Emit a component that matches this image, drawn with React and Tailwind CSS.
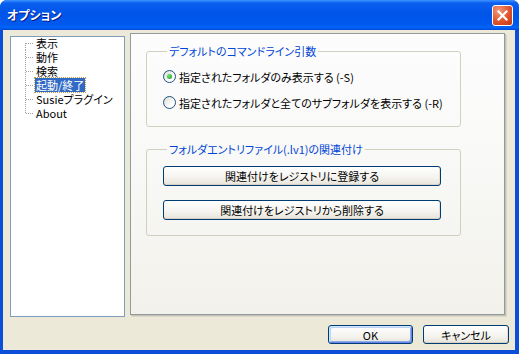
import React from "react";

const FONT = "font-['Noto_Sans_CJK_JP','Noto_Sans',sans-serif] [font-feature-settings:'palt']";

const treeItems = ["表示", "動作", "検索", "起動/終了", "Susieプラグイン", "About"];

function TreeConnector({ first, last }) {
  // dotted tree lines drawn per row
  return (
    <svg width="10" height="14" className="shrink-0" shapeRendering="crispEdges">
      <line
        x1="0.5"
        y1={first ? 7 : 0}
        x2="0.5"
        y2={last ? 7 : 14}
        stroke="#A0A0A0"
        strokeDasharray="1 1"
      />
      <line x1="1" y1="7.5" x2="9" y2="7.5" stroke="#A0A0A0" strokeDasharray="1 1" />
    </svg>
  );
}

function Radio({ checked, label }) {
  return (
    <div className="flex items-center gap-[3px] h-[13px]">
      <span className="w-[13px] h-[13px] rounded-full border border-[#1C5180] bg-[linear-gradient(135deg,#DCDBD4_0%,#FFFFFF_70%)] flex items-center justify-center shrink-0">
        {checked && (
          <span className="w-[5px] h-[5px] rounded-full bg-[radial-gradient(circle_at_35%_35%,#6BE46A,#1E9A1E)]" />
        )}
      </span>
      <span className="text-[11px] leading-[14px] text-black whitespace-nowrap">{label}</span>
    </div>
  );
}

function XPButton({ children, className = "", isDefault }) {
  return (
    <button
      className={
        "h-[20px] rounded-[3px] border border-[#003C74] bg-[linear-gradient(to_bottom,#FFFFFF_0%,#F4F3EE_60%,#E6E3D8_100%)] text-[11px] leading-[14px] text-black flex items-center justify-center " +
        (isDefault
          ? "shadow-[inset_1px_1px_0_#CEE7FF,inset_-1px_-1px_0_#6982EE,inset_2px_2px_0_#BCD4F6,inset_-2px_-2px_0_#89ADE4] "
          : "shadow-[inset_0_-1px_0_#D6D0C5,inset_-1px_0_0_#E2DFD6] ") +
        className
      }
    >
      {children}
    </button>
  );
}

export default function App() {
  return (
    <div className={`w-[519px] h-[354px] flex flex-col bg-[#0B4FD8] rounded-t-[7px] overflow-hidden ${FONT}`}>
      {/* Title bar */}
      <div className="h-[30px] shrink-0 flex items-center justify-between pl-[7px] pr-[6px] bg-[linear-gradient(to_bottom,#3D95FF_0%,#0A5FEF_10%,#0055E8_45%,#0058EE_80%,#0064F6_92%,#0046D8_100%)]">
        <span className="text-white font-bold text-[12px] leading-[16px] [text-shadow:1px_1px_0_#0A1883]">オプション</span>
        <div className="w-[21px] h-[21px] rounded-[3px] border border-white bg-[radial-gradient(circle_at_30%_25%,#F29A7C_0%,#E0532B_55%,#C2360F_100%)] flex items-center justify-center">
          <svg width="11" height="11" viewBox="0 0 11 11">
            <path d="M1.5 1.5 L9.5 9.5 M9.5 1.5 L1.5 9.5" stroke="#FFFFFF" strokeWidth="2.2" strokeLinecap="square" />
          </svg>
        </div>
      </div>

      {/* Body */}
      <div className="flex-1 flex flex-col ml-[3px] mr-[4px] mb-[4px] bg-[#ECE9D8]">
        <div className="flex items-start gap-[5px] pt-[3px] pl-[7px]">
          {/* Tree */}
          <div className="mt-[3px] w-[115px] h-[281px] bg-white border border-[#7F9DB9] pl-[14px]">
            <div className="flex flex-col -mt-px">
              {treeItems.map((item, i) => (
                <div key={item} className="flex items-center h-[14px]">
                  <TreeConnector first={i === 0} last={i === treeItems.length - 1} />
                  {i === 3 ? (
                    <span className="text-[11px] leading-[14px] text-white bg-[#316AC5] outline-1 outline-dotted outline-[#C8A04A] px-[1px] whitespace-nowrap">
                      {item}
                    </span>
                  ) : (
                    <span className="text-[11px] leading-[14px] text-black px-[1px] whitespace-nowrap">{item}</span>
                  )}
                </div>
              ))}
            </div>
          </div>

          {/* Tab page */}
          <div className="w-[375px] h-[282px] border border-[#919B9C] bg-[linear-gradient(to_bottom,#FDFDFE_0%,#F8F8F6_50%,#F2F1EB_100%)] shadow-[1px_1px_0_#C4C2B6,2px_2px_0_#DAD7C8] pt-[10px] pl-[15px]">
            <fieldset className="w-[315px] border border-[#D0D0BF] rounded-[3px] pl-[16px] pt-[12px] pb-[17px]">
              <legend className="ml-[4px] px-[2px] text-[11px] leading-[14px] text-[#0046D5]">
                デフォルトのコマンドライン引数
              </legend>
              <div className="flex flex-col gap-[13px]">
                <Radio checked label="指定されたフォルダのみ表示する (-S)" />
                <Radio label="指定されたフォルダと全てのサブフォルダを表示する (-R)" />
              </div>
            </fieldset>

            <fieldset className="mt-[15px] w-[315px] border border-[#D0D0BF] rounded-[3px] pl-[16px] pt-[10px] pb-[15px]">
              <legend className="ml-[4px] px-[2px] text-[11px] leading-[14px] text-[#0046D5]">
                フォルダエントリファイル(.lv1)の関連付け
              </legend>
              <div className="flex flex-col gap-[14px]">
                <XPButton className="w-[278px]">関連付けをレジストリに登録する</XPButton>
                <XPButton className="w-[278px]">関連付けをレジストリから削除する</XPButton>
              </div>
            </fieldset>
          </div>
        </div>

        {/* Dialog buttons */}
        <div className="flex justify-end gap-[10px] pr-[6px] mt-[8px]">
          <XPButton isDefault className="w-[85px] !h-[19px]">OK</XPButton>
          <XPButton className="w-[86px] !h-[19px]">キャンセル</XPButton>
        </div>
      </div>
    </div>
  );
}
